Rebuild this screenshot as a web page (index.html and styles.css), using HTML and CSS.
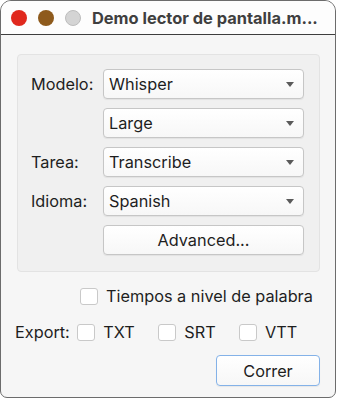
FILE: index.html
```html
<!DOCTYPE html>
<html lang="es">
<head>
  <meta charset="utf-8">
  <title>Demo lector de pantalla</title>
  <link rel="stylesheet" href="styles.css">
</head>
<body>

<div class="window">
  <div class="titlebar">
    <span class="light red"></span>
    <span class="light brown"></span>
    <span class="light grey"></span>
    <span class="title">Demo lector de pantalla.m...</span>
  </div>

  <div class="content">
    <div class="group">
      <div class="form">
        <label class="lbl">Modelo:</label>
        <div class="combo"><span>Whisper</span><i class="arrow"></i></div>

        <span></span>
        <div class="combo"><span>Large</span><i class="arrow"></i></div>

        <label class="lbl">Tarea:</label>
        <div class="combo"><span>Transcribe</span><i class="arrow"></i></div>

        <label class="lbl">Idioma:</label>
        <div class="combo"><span>Spanish</span><i class="arrow"></i></div>

        <span></span>
        <div class="button">Advanced...</div>
      </div>
    </div>

    <div class="row words">
      <span class="check"></span>
      <span>Tiempos a nivel de palabra</span>
    </div>

    <div class="row export">
      <span class="export-lbl">Export:</span>
      <span class="opt"><span class="check"></span>TXT</span>
      <span class="opt"><span class="check"></span>SRT</span>
      <span class="opt"><span class="check"></span>VTT</span>
    </div>

    <div class="row actions">
      <div class="button primary">Correr</div>
    </div>
  </div>
</div>

</body>
</html>
```

FILE: styles.css
```css
body{
  margin: 0;
  background-color: #fff;
  font-family: Inter, "Liberation Sans", sans-serif;
  font-size: 16.3px;
  color: #1e1e1e;
}

.window{
  box-sizing: border-box;
  width: 336px;
  height: 398px;
  border: 1px solid #6c6c6c;
  border-radius: 11px 11px 7px 7px;
  overflow: hidden;
  display: flex;
  flex-direction: column;
  background-color: #f6f6f6;
}

/* title bar ========================================= */

.titlebar{
  height: 33px;
  border-bottom: 1px solid #3e3e3e;
  background-color: #fdfdfd;
  display: flex;
  align-items: center;
  padding-left: 10px;
}

.light{
  width: 16px;
  height: 16px;
  border-radius: 50%;
  margin-right: 11px;
  box-sizing: border-box;
}

.red{ background-color: #e0281d; }
.brown{ background-color: #8e5a1c; }
.grey{ background-color: #d4d4d4; border: 1px solid #bcbcbc; }

.title{
  margin-left: 0;
  font-weight: bold;
  font-size: 16.4px;
  color: #3f3f3f;
  white-space: nowrap;
}

/* content =========================================== */

.content{
  padding: 19px 15px 0 16px;
}

.group{
  border: 1px solid #e3e3e3;
  border-radius: 4px;
  background-color: #f0f0f0;
  padding: 14px 15px 16px 13px;
}

.form{
  display: grid;
  grid-template-columns: 72px 201px;
  row-gap: 9px;
  align-items: center;
}

.combo, .button{
  box-sizing: border-box;
  height: 30px;
  border: 1px solid #c6c6c6;
  border-radius: 4px;
  background: linear-gradient(#ffffff, #f7f7f7);
  box-shadow: 0 1px 1px rgba(0,0,0,0.06);
  display: flex;
  align-items: center;
}

.combo{
  padding: 0 9px 0 5px;
  justify-content: space-between;
}

.arrow{
  width: 0;
  height: 0;
  border-left: 4px solid transparent;
  border-right: 4px solid transparent;
  border-top: 5px solid #5a5a5a;
}

.button{
  justify-content: center;
}

.row{
  display: flex;
  align-items: center;
}

.check{
  box-sizing: border-box;
  width: 18px;
  height: 17px;
  border: 1px solid #c9c9c9;
  border-radius: 3px;
  background-color: #fff;
  margin-right: 8px;
}

.words{
  margin-top: 14px;
  padding-left: 63px;
}

.export{
  margin-top: 16px;
  margin-left: -2px;
}

.export-lbl{
  width: 64px;
}

.opt{
  display: flex;
  align-items: center;
  width: 83px;
}

.actions{
  justify-content: flex-end;
  margin-top: 13px;
}

.primary{
  width: 104px;
  height: 31px;
  border-color: #84b2e8;
}
```
